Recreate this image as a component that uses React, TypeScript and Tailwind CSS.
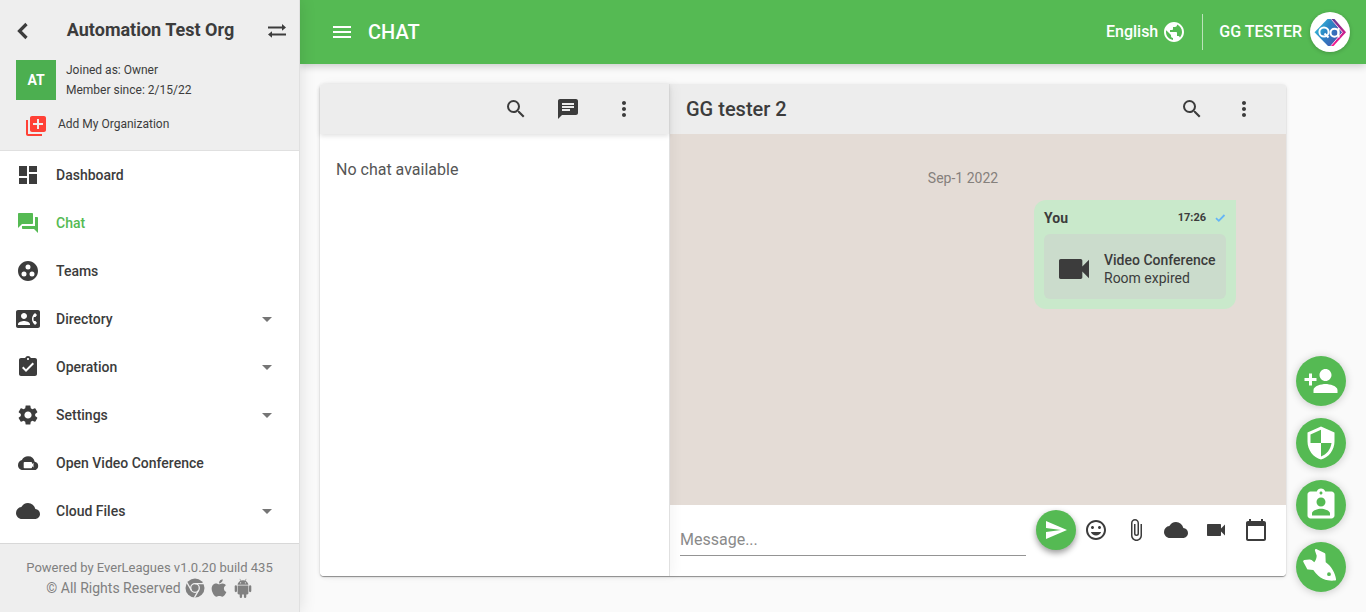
import type { ComponentType, ReactNode } from 'react';
import {
  MdArrowDropDown,
  MdAssignmentInd,
  MdAssignmentTurnedIn,
  MdAttachFile,
  MdChat,
  MdCloud,
  MdContactPhone,
  MdDashboard,
  MdGroupWork,
  MdInsertEmoticon,
  MdLibraryAdd,
  MdMenu,
  MdMoreVert,
  MdPersonAdd,
  MdPublic,
  MdQuestionAnswer,
  MdSearch,
  MdSecurity,
  MdSend,
  MdSettings,
  MdVideocam,
} from 'react-icons/md';
import { FaApple } from 'react-icons/fa';

type IconProps = { className?: string };

function BackIcon({ className }: IconProps) {
  return (
    <svg viewBox="0 0 24 24" className={className} fill="none" stroke="currentColor" strokeWidth="3.2" aria-hidden="true">
      <path d="M16.5 6 9.500 13l7 7" />
    </svg>
  );
}

function SwapIcon({ className }: IconProps) {
  return (
    <svg viewBox="0 0 20 16" className={className} fill="currentColor" aria-hidden="true">
      <path d="M1 4.500h14V2L19 5.500l-4 3.300V6.500H1zM19 11.500H5V9.200l-4 3.300 4 3.300v-2.300h14z" />
    </svg>
  );
}

function CheckIcon({ className }: IconProps) {
  return (
    <svg viewBox="0 0 12 12" className={className} fill="none" stroke="currentColor" strokeWidth="1.8" aria-hidden="true">
      <path d="m2 6.200 2.800 2.600L10.500 3" />
    </svg>
  );
}

function ChromeIcon({ className }: IconProps) {
  return (
    <svg viewBox="0 0 20 20" className={className} aria-hidden="true">
      <circle cx="10" cy="10" r="9.500" fill="currentColor" />
      <g fill="none" stroke="#eee" strokeWidth="1.3">
        <circle cx="10" cy="10" r="4.300" />
        <path d="M10 5.700h9M6.300 12.200 2 4.600M13.700 12.200 9.400 19.600" />
      </g>
    </svg>
  );
}

function AndroidIcon({ className }: IconProps) {
  return (
    <svg viewBox="0 0 20 20" className={className} fill="currentColor" aria-hidden="true">
      <path
        fillRule="evenodd"
        d="M4.600 6.800C4.800 4.900 5.900 3.500 7.500 2.700L6.500 1l.5-.3 1 1.800a6.500 6.500 0 0 1 4 0l1-1.800.5.3-1 1.700c1.600.8 2.700 2.200 2.900 4.100zM7.600 4.200a.6.6 0 1 0 0 1.200.6.6 0 0 0 0-1.200zm4.800 0a.6.6 0 1 0 0 1.200.6.6 0 0 0 0-1.200z"
      />
      <path d="M4.600 7.500h10.800v7.700c0 .7-.5 1.200-1.200 1.200h-.9v2.300a1.200 1.200 0 0 1-2.400 0v-2.300H9.100v2.300a1.200 1.200 0 0 1-2.400 0v-2.300h-.9c-.7 0-1.200-.5-1.200-1.200z" />
      <rect x="1.700" y="7.300" width="2.300" height="6.900" rx="1.150" />
      <rect x="16" y="7.300" width="2.300" height="6.900" rx="1.150" />
    </svg>
  );
}

function CloudVideoIcon({ className }: IconProps) {
  return (
    <svg viewBox="0 0 24 24" className={className} fill="currentColor" aria-hidden="true">
      <path
        fillRule="evenodd"
        d="M18.700 10.800A6.900 6.900 0 0 0 12 5.200a6.900 6.900 0 0 0-6.100 3.700A5.500 5.500 0 0 0 2 14.200c0 2.800 2.200 4.900 5 4.900h11c2.400 0 4.200-1.800 4.200-4.200 0-2.200-1.500-3.900-3.500-4.100zM8.500 11h6.700c.4 0 .8.4.8.8v1.200l1.500-1.200v4.700L16 15.300v1.200c0 .4-.4.8-.8.8H8.500a.8.8 0 0 1-.8-.8v-4.700c0-.4.4-.8.8-.8z"
      />
    </svg>
  );
}

function CalendarIcon({ className }: IconProps) {
  return (
    <svg viewBox="0 0 24 24" className={className} fill="currentColor" aria-hidden="true">
      <path d="M20 3h-1V1h-2v2H7V1H5v2H4c-1.100 0-2 .9-2 2v16c0 1.100.9 2 2 2h16c1.100 0 2-.9 2-2V5c0-1.100-.9-2-2-2zm0 18H4V8h16v13z" />
    </svg>
  );
}

function RocketFishIcon({ className }: IconProps) {
  return (
    <svg viewBox="0 0 36 36" className={className} fill="currentColor" aria-hidden="true">
      <path
        fillRule="evenodd"
        d="M12 1.700c-.3-1 .6-2 1.700-1.500l7.800 3.900c.6.300.9.800.9 1.400l.3 7.800c3.200 2.200 5.300 4.700 7 7.700 1.800 3 2.800 5.800 3.300 9 .2 1-.2 1.500-1.100 1.500-2.500.2-4.700.2-7-.2-3.600-.7-6.700-2.200-9.600-4.600-2-1.700-3.500-3.600-5-5.700l-5-.4c-.6 0-1-.4-1.300-.9L.4 13c-.5-1-.1-1.800.9-2l5-.6c.9-.1 1.600.1 2.300.6l2.700 2.200c1.500-1.800 2.300-3.900 2.400-6.500zM26 23.300a1.900 1.900 0 1 0 0 3.800 1.900 1.900 0 0 0 0-3.800z"
      />
    </svg>
  );
}

function AvatarLogo({ className }: IconProps) {
  return (
    <svg viewBox="0 0 40 40" className={className} aria-hidden="true">
      <defs>
        <linearGradient id="avatar-left" x1="0" y1="0" x2="1" y2="0.6">
          <stop offset="0" stopColor="#3ccde0" />
          <stop offset="0.5" stopColor="#2b86c5" />
          <stop offset="1" stopColor="#4656b0" />
        </linearGradient>
        <linearGradient id="avatar-right" x1="0" y1="0" x2="0" y2="1">
          <stop offset="0" stopColor="#5b3a96" />
          <stop offset="0.45" stopColor="#c01f8c" />
          <stop offset="1" stopColor="#f9148c" />
        </linearGradient>
      </defs>
      <path d="M20.500 7h4L36 20.300 23.500 34h-4z" fill="url(#avatar-right)" />
      <path d="M17.500 7h3L32 20.300 20.500 34h-2.500L4.500 20.300z" fill="url(#avatar-left)" />
      <path d="M21.300 7.300 32.500 20.300 21 33.700" fill="none" stroke="#fff" strokeWidth="0.800" />
      <g fill="none" stroke="#fff" strokeWidth="2">
        <circle cx="14" cy="20" r="4.600" />
        <path d="m14.500 21.500 4 4" />
        <circle cx="24.500" cy="20.700" r="4" />
        <path d="M28.500 16v9.500" />
      </g>
    </svg>
  );
}

type NavItem = { label: string; icon: ComponentType<IconProps>; active?: boolean; expandable?: boolean };

const navItems: NavItem[] = [
  { label: 'Dashboard', icon: MdDashboard },
  { label: 'Chat', icon: MdQuestionAnswer, active: true },
  { label: 'Teams', icon: MdGroupWork },
  { label: 'Directory', icon: MdContactPhone, expandable: true },
  { label: 'Operation', icon: MdAssignmentTurnedIn, expandable: true },
  { label: 'Settings', icon: MdSettings, expandable: true },
  { label: 'Open Video Conference', icon: CloudVideoIcon },
  { label: 'Cloud Files', icon: MdCloud, expandable: true },
];

function IconButton({ label, className = '', children }: { label: string; className?: string; children: ReactNode }) {
  return (
    <button type="button" aria-label={label} className={`flex shrink-0 items-center justify-center ${className}`}>
      {children}
    </button>
  );
}

function Sidebar() {
  return (
    <aside className="relative z-20 flex w-[300px] shrink-0 flex-col border-r border-[#e0e0e0] bg-white shadow-[0_0_16px_rgba(0,0,0,0.12)]">
      <div className="border-b border-[#e0e0e0] bg-[#eee] pb-3.5">
        <div className="flex h-15 items-center justify-between pr-3 pl-2.5">
          <IconButton label="Back" className="size-6">
            <BackIcon className="size-6" />
          </IconButton>
          <h2 className="text-lg font-bold">Automation Test Org</h2>
          <IconButton label="Switch organization" className="h-6 w-5">
            <SwapIcon className="h-4 w-5" />
          </IconButton>
        </div>
        <div className="flex gap-2.5 pl-4">
          <div className="flex size-10 items-center justify-center bg-[#4caf50] text-sm font-bold text-white">AT</div>
          <div className="text-xs leading-5">
            <p>Joined as: Owner</p>
            <p>Member since: 2/15/22</p>
          </div>
        </div>
        <button type="button" className="mt-3 ml-6 flex h-6 items-center gap-2.5 text-xs">
          <MdLibraryAdd className="mt-1 size-6 text-[#ff4136]" />
          Add My Organization
        </button>
      </div>
      <nav className="min-h-0 flex-1 overflow-hidden">
        {navItems.map(({ label, icon: Icon, active, expandable }) => (
          <a
            key={label}
            href="#"
            className={`flex h-12 items-center gap-4 pr-5 pl-4 text-sm font-medium ${active ? 'text-[#55ba53]' : ''}`}
          >
            <Icon className="size-6" />
            <span className="flex-1">{label}</span>
            {expandable && <MdArrowDropDown className="size-6 text-[#757575]" />}
          </a>
        ))}
      </nav>
      <footer className="flex h-[69px] shrink-0 flex-col items-center justify-center border-t border-[#d8d8d8] bg-[#eee] leading-5 text-[#808080]">
        <p className="text-[13px] leading-5">Powered by EverLeagues v1.0.20 build 435</p>
        <p className="flex items-center gap-1 text-sm leading-5">
          © All Rights Reserved
          <ChromeIcon className="size-5" />
          <FaApple className="size-5" />
          <AndroidIcon className="size-5" />
        </p>
      </footer>
    </aside>
  );
}

function TopBar() {
  return (
    <header className="relative z-10 flex h-16 shrink-0 items-center bg-[#55ba53] pr-4 pl-7.5 text-white shadow-[0_2px_8px_rgba(0,0,0,0.2)]">
      <IconButton label="Toggle menu" className="size-6">
        <MdMenu className="size-6" />
      </IconButton>
      <h1 className="ml-3.5 flex-1 text-xl font-medium">CHAT</h1>
      <button type="button" className="flex items-center gap-1 text-base font-medium">
        English
        <MdPublic className="size-6" />
      </button>
      <div className="mx-4 h-9 w-px bg-white/60" />
      <button type="button" className="flex items-center gap-2 text-base font-medium">
        GG TESTER
        <span className="size-10 rounded-full bg-white shadow-[0_1px_4px_rgba(0,0,0,0.2)]">
          <AvatarLogo className="size-10" />
        </span>
      </button>
    </header>
  );
}

function ChatList() {
  return (
    <section className="relative z-10 flex w-[350px] shrink-0 flex-col rounded-l border-r border-[#e0e0e0] bg-white shadow-[4px_0_12px_rgba(0,0,0,0.04)]">
      <div className="flex h-[50px] shrink-0 items-center justify-end gap-7 rounded-tl bg-[#ededed] pr-[33px] shadow-[0_2px_5px_rgba(0,0,0,0.12)]">
        <IconButton label="Search chats" className="size-6">
          <MdSearch className="size-6" />
        </IconButton>
        <IconButton label="New chat" className="size-6">
          <MdChat className="size-6" />
        </IconButton>
        <IconButton label="More" className="ml-1 size-6">
          <MdMoreVert className="size-6" />
        </IconButton>
      </div>
      <p className="px-4 pt-6 text-base text-[#555]">No chat available</p>
    </section>
  );
}

function Message() {
  return (
    <article className="mr-[50px] w-[202px] self-end rounded-xl rounded-tr-none bg-[#c9e9cb] p-2.5">
      <div className="flex h-4 items-center">
        <strong className="flex-1 text-sm font-bold">You</strong>
        <time className="text-[11px] font-bold">17:26</time>
        <CheckIcon className="ml-2 size-3 text-[#64b5f6]" />
      </div>
      <div className="mt-2 flex h-[65px] items-center gap-2.5 rounded-md bg-[#cbdccc] pt-1 pl-2.5">
        <MdVideocam className="size-10 shrink-0" />
        <div className="text-sm leading-[18px] whitespace-nowrap">
          <p className="font-medium">Video Conference</p>
          <p>Room expired</p>
        </div>
      </div>
    </article>
  );
}

function Composer() {
  return (
    <form className="flex h-[71px] shrink-0 rounded-br bg-white px-2.5" onSubmit={(event) => event.preventDefault()}>
      <div className="flex flex-1 flex-col pt-[19px]">
        <input
          type="text"
          aria-label="Message"
          placeholder="Message..."
          className="h-8 w-full border-b border-[#949494] bg-transparent text-base outline-none placeholder:text-[#8a8a8a]"
        />
      </div>
      <div className="ml-2.5 flex h-[50px] items-center">
        <button
          type="submit"
          aria-label="Send"
          className="flex size-10 items-center justify-center rounded-full bg-[#55ba53] text-white shadow-[0_3px_6px_rgba(0,0,0,0.4)]"
        >
          <MdSend className="size-6" />
        </button>
        <IconButton label="Emoji" className="size-10">
          <MdInsertEmoticon className="size-6" />
        </IconButton>
        <IconButton label="Attach file" className="size-10">
          <MdAttachFile className="size-6" />
        </IconButton>
        <IconButton label="Cloud files" className="size-10">
          <MdCloud className="size-6" />
        </IconButton>
        <IconButton label="Video conference" className="size-10">
          <MdVideocam className="size-6" />
        </IconButton>
        <IconButton label="Calendar" className="size-10">
          <CalendarIcon className="size-6" />
        </IconButton>
      </div>
    </form>
  );
}

function Conversation() {
  return (
    <section className="flex min-w-0 flex-1 flex-col">
      <div className="flex h-[50px] shrink-0 items-center rounded-tr bg-[#ededed] pr-7.5 pl-4">
        <h2 className="flex-1 text-xl font-medium">GG tester 2</h2>
        <IconButton label="Search messages" className="mr-7 size-6">
          <MdSearch className="size-6" />
        </IconButton>
        <IconButton label="Conversation options" className="size-6">
          <MdMoreVert className="size-6" />
        </IconButton>
      </div>
      <div className="flex min-h-0 flex-1 flex-col overflow-hidden bg-[#e4dcd6] pt-[34px]">
        <p className="mb-3 pr-7.5 text-center text-sm text-[#85807c]">Sep-1 2022</p>
        <Message />
      </div>
      <Composer />
    </section>
  );
}

const quickActions: { label: string; icon: ComponentType<IconProps> }[] = [
  { label: 'Add person', icon: MdPersonAdd },
  { label: 'Security', icon: MdSecurity },
  { label: 'Assignments', icon: MdAssignmentInd },
  { label: 'Launch', icon: RocketFishIcon },
];

export default function App() {
  return (
    <div className="flex h-screen bg-[#fafafa] font-[Roboto,sans-serif] text-[#3c3c3c]">
      <Sidebar />
      <div className="flex min-w-0 flex-1 flex-col">
        <TopBar />
        <main className="flex min-h-0 flex-1 pt-5 pr-20 pb-9 pl-5">
          <div className="flex min-w-0 flex-1 rounded shadow-[0_1px_1px_rgba(0,0,0,0.4),0_1px_4px_rgba(0,0,0,0.1)]">
            <ChatList />
            <Conversation />
          </div>
        </main>
      </div>
      <div className="fixed right-5 bottom-5 z-30 flex flex-col gap-3">
        {quickActions.map(({ label, icon: Icon }) => (
          <button
            key={label}
            type="button"
            aria-label={label}
            className="flex size-[50px] items-center justify-center rounded-full bg-[#55ba53] text-white shadow-[0_1px_8px_rgba(0,0,0,0.2)]"
          >
            <Icon className="size-9" />
          </button>
        ))}
      </div>
    </div>
  );
}
